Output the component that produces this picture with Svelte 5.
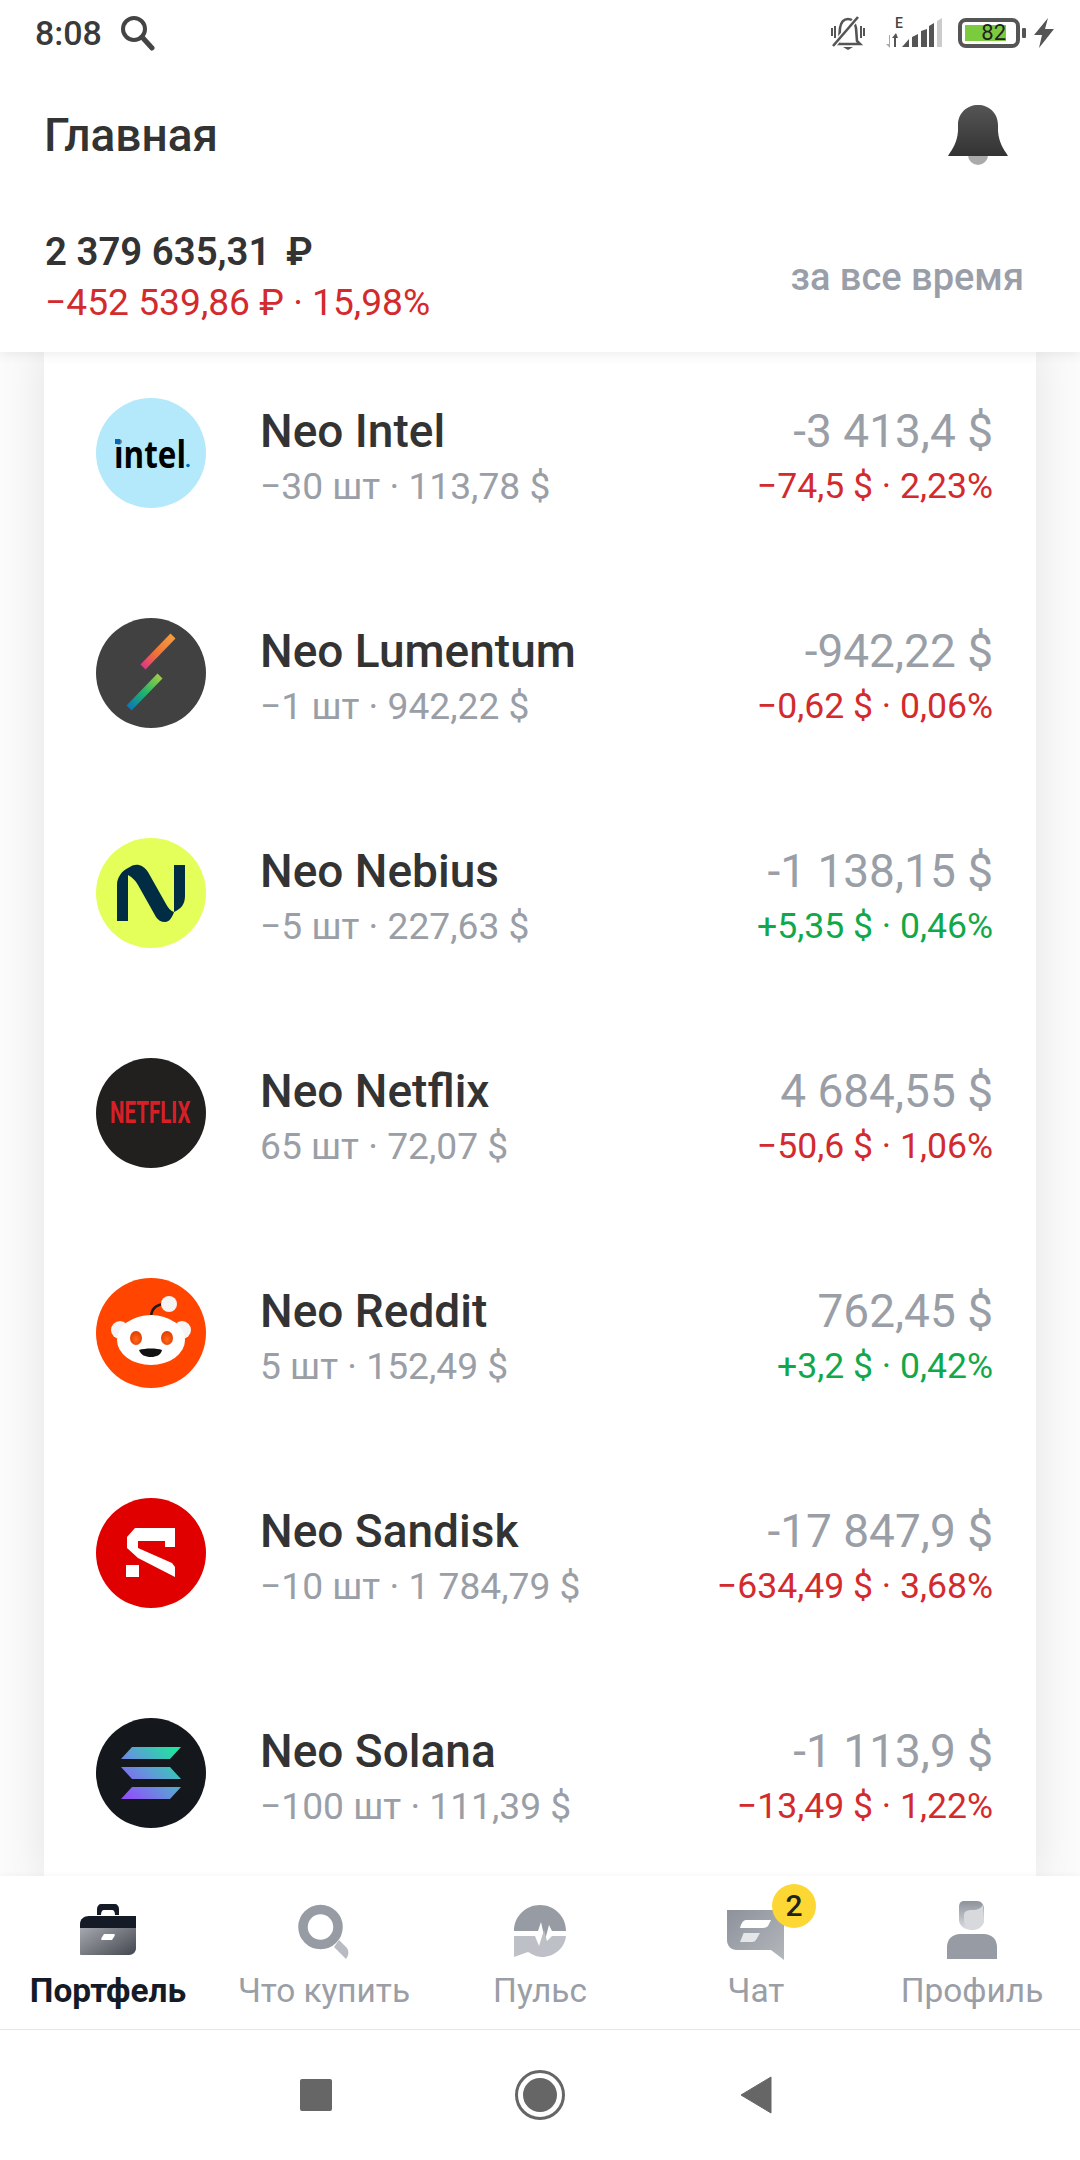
<script lang="ts">
    interface Position {
        id: string;
        name: string;
        sub: string;
        value: string;
        change: string;
        up: boolean;
    }

    const positions: Position[] = [
        { id: "intel", name: "Neo Intel", sub: "−30 шт · 113,78 $", value: "-3 413,4 $", change: "−74,5 $ · 2,23%", up: false },
        { id: "lumentum", name: "Neo Lumentum", sub: "−1 шт · 942,22 $", value: "-942,22 $", change: "−0,62 $ · 0,06%", up: false },
        { id: "nebius", name: "Neo Nebius", sub: "−5 шт · 227,63 $", value: "-1 138,15 $", change: "+5,35 $ · 0,46%", up: true },
        { id: "netflix", name: "Neo Netflix", sub: "65 шт · 72,07 $", value: "4 684,55 $", change: "−50,6 $ · 1,06%", up: false },
        { id: "reddit", name: "Neo Reddit", sub: "5 шт · 152,49 $", value: "762,45 $", change: "+3,2 $ · 0,42%", up: true },
        { id: "sandisk", name: "Neo Sandisk", sub: "−10 шт · 1 784,79 $", value: "-17 847,9 $", change: "−634,49 $ · 3,68%", up: false },
        { id: "solana", name: "Neo Solana", sub: "−100 шт · 111,39 $", value: "-1 113,9 $", change: "−13,49 $ · 1,22%", up: false },
    ];

    const tabs = [
        { id: "case", label: "Портфель" },
        { id: "search", label: "Что купить" },
        { id: "pulse", label: "Пульс" },
        { id: "chat", label: "Чат" },
        { id: "profile", label: "Профиль" },
    ];
</script>

<div class="screen">
    <header class="top">
        <div class="status">
            <div class="status-left">
                <span class="time">8:08</span>
                <svg class="status-search" width="36" height="36" viewBox="0 0 36 36">
                    <circle cx="15" cy="14" r="11" fill="none" stroke="#444" stroke-width="4" />
                    <path d="M23 22 L33 33" stroke="#444" stroke-width="5" stroke-linecap="round" />
                </svg>
            </div>
            <div class="status-right">
                <svg class="muted" width="36" height="36" viewBox="0 0 36 36">
                    <path d="M8 29 L10 26 L11 13 C12 7 15 4 19 4 C23 4 26 7 27 13 L28 26 L31 29 H8" fill="none" stroke="#555" stroke-width="2.600" />
                    <path d="M14 32 H24 L19 35 Z" fill="#555" />
                    <path d="M3 13 V21 M6 11 V23 M32 11 V23 M35 13 V21" stroke="#555" stroke-width="2" />
                    <path d="M29 2 L4 31" stroke="#fff" stroke-width="5" />
                    <path d="M29 2 L4 31" stroke="#555" stroke-width="2.600" />
                </svg>
                <svg class="signal" width="60" height="30" viewBox="0 0 60 30">
                    <path d="M4 17 V26 H1 L5 30 V17 Z" fill="#aaa" />
                    <path d="M9 29 V20 H7 L11 15 L13 20 H11 V29 Z" fill="#555" />
                    <path d="M17 29 L24 21 V29 Z M27 29 V19 L33 16 V29 Z M36 29 V13 L42 11 V29 Z M44 29 V8 L49 5 V29 Z" fill="#555" />
                    <path d="M52 29 V3 L57 0 V29 Z" fill="#ccc" />
                    <text x="10" y="10" class="e-mark">E</text>
                </svg>
                <div class="battery">
                    <div class="battery-box"><span class="battery-fill">82</span></div>
                    <span class="battery-nub"></span>
                </div>
                <svg class="bolt" width="20" height="30" viewBox="0 0 20 30">
                    <path d="M14 0 L0 17 H8 L5 30 L20 11 H11 Z" fill="#555" />
                </svg>
            </div>
        </div>

        <div class="title-row">
            <h1>Главная</h1>
            <svg width="60" height="60" viewBox="0 0 60 60">
                <defs>
                    <linearGradient id="bell" x1="0" y1="0" x2="0" y2="1">
                        <stop offset="0" stop-color="#555" />
                        <stop offset="1" stop-color="#333" />
                    </linearGradient>
                </defs>
                <circle cx="30" cy="50" r="10" fill="#aaa" />
                <path d="M0 51 C5 43 9 38 10 26 V20 C10 8 19 0 30 0 C41 0 50 8 50 20 V26 C51 38 55 43 60 51 Z" fill="url(#bell)" />
            </svg>
        </div>

        <div class="summary">
            <div>
                <div class="total">2 379 635,31 <span class="rub">₽</span></div>
                <div class="delta">−452 539,86 ₽ · 15,98%</div>
            </div>
            <span class="period">за все время</span>
        </div>
    </header>

    <main class="list">
        <div class="card">
            {#each positions as p}
                <div class="row">
                    <svg class="logo" viewBox="0 0 110 110">
                        {#if p.id === "intel"}
                            <circle cx="55" cy="55" r="55" fill="#b3e9fa" />
                            <text x="18" y="70" class="intel" textLength="72" lengthAdjust="spacingAndGlyphs">intel</text>
                            <rect x="18.500" y="40.500" width="6" height="6" fill="#b3e9fa" />
                            <rect x="19" y="41" width="5" height="5" fill="#0068b5" />
                            <circle cx="92" cy="67.500" r="1.800" fill="#0068b5" />
                        {:else if p.id === "lumentum"}
                            <defs>
                                <linearGradient id="lum1" gradientUnits="userSpaceOnUse" x1="79" y1="18" x2="44" y2="52">
                                    <stop offset="0" stop-color="#f6a040" />
                                    <stop offset="0.55" stop-color="#ee7038" />
                                    <stop offset="1" stop-color="#e0259a" />
                                </linearGradient>
                                <linearGradient id="lum2" gradientUnits="userSpaceOnUse" x1="66" y1="57" x2="31" y2="92">
                                    <stop offset="0" stop-color="#a8d040" />
                                    <stop offset="0.5" stop-color="#1fb56a" />
                                    <stop offset="1" stop-color="#0a6ec0" />
                                </linearGradient>
                            </defs>
                            <circle cx="55" cy="55" r="55" fill="#414141" />
                            <path d="M77 18 L47 49" stroke="url(#lum1)" stroke-width="7" />
                            <path d="M64 58 L33 90" stroke="url(#lum2)" stroke-width="7" />
                        {:else if p.id === "nebius"}
                            <circle cx="55" cy="55" r="55" fill="#e4ff59" />
                            <path d="M21 83 V47 C21 39 26 33 32 30 C36 27 40 26 43 27 C47 28 50 31 52 34 L70 66 C72 70 75 73 78 74 C76 80 73 84 69 84 C65 84 62 82 60 79 L42 47 C39 42 36 39 32 37 V83 Z" fill="#002c44" />
                            <path d="M78 27 H89 V58 C89 66 85 71 78 74 Z" fill="#002c44" />
                        {:else if p.id === "netflix"}
                            <circle cx="55" cy="55" r="55" fill="#221f1f" />
                            <text class="netflix" transform="translate(14 65) scale(1 1.500)">NETFLIX</text>
                        {:else if p.id === "reddit"}
                            <defs>
                                <radialGradient id="eye" cx="0.5" cy="0.6" r="0.6">
                                    <stop offset="0" stop-color="#ff6a1a" />
                                    <stop offset="1" stop-color="#e03a00" />
                                </radialGradient>
                            </defs>
                            <circle cx="55" cy="55" r="55" fill="#ff4500" />
                            <path d="M55 40 C55 31 60 27 67 26" fill="none" stroke="#1c1c1c" stroke-width="2.500" />
                            <circle cx="73" cy="26" r="8" fill="#f4f4f4" />
                            <circle cx="24" cy="52" r="9" fill="#f4f4f4" />
                            <circle cx="86" cy="52" r="9" fill="#f4f4f4" />
                            <ellipse cx="55" cy="62" rx="34" ry="25" fill="#fff" />
                            <ellipse cx="40" cy="60" rx="6" ry="7" fill="url(#eye)" />
                            <ellipse cx="71" cy="60" rx="6" ry="7" fill="url(#eye)" />
                            <path d="M43 72 C49 70 61 70 66 72 C65 77 60 79 55 79 C49 79 45 77 43 72 Z" fill="#111" />
                        {:else if p.id === "sandisk"}
                            <circle cx="55" cy="55" r="55" fill="#e00000" />
                            <path d="M79 30 H39 L31 39 V50 L42 60 L79 79 V69 L76 65 L42 50 V43 H69 V49 H79 Z" fill="#fff" />
                            <rect x="30" y="67" width="13" height="12" fill="#fff" />
                        {:else}
                            <defs>
                                <linearGradient id="sol" gradientUnits="userSpaceOnUse" x1="28" y1="84" x2="82" y2="26">
                                    <stop offset="0" stop-color="#9945ff" />
                                    <stop offset="0.5" stop-color="#5f9bd8" />
                                    <stop offset="1" stop-color="#14f195" />
                                </linearGradient>
                            </defs>
                            <circle cx="55" cy="55" r="55" fill="#14171c" />
                            <path d="M36 29 H85 L74 41 H25 Z M25 49 H74 L85 61 H36 Z M36 69 H85 L74 81 H25 Z" fill="url(#sol)" />
                        {/if}
                    </svg>
                    <div class="info">
                        <div class="name">{p.name}</div>
                        <div class="sub">{p.sub}</div>
                    </div>
                    <div class="amounts">
                        <div class="value">{p.value}</div>
                        <div class="change" class:up={p.up}>{p.change}</div>
                    </div>
                </div>
            {/each}
        </div>
    </main>

    <nav class="tabs">
        {#each tabs as t, i}
            <div class="tab" class:active={i === 0}>
                <svg width="64" height="64" viewBox="0 0 64 64">
                    {#if t.id === "case"}
                        <defs>
                            <linearGradient id="caseBody" x1="0" y1="0" x2="1" y2="0.8">
                                <stop offset="0" stop-color="#a5a8ae" />
                                <stop offset="1" stop-color="#4b4f57" />
                            </linearGradient>
                        </defs>
                        <path d="M21 15 V9 C21 6 23 4 25 4 H39 C41 4 43 6 43 9 V15 H39 C39 12 38 10 36 10 H28 C26 10 25 12 25 15 Z" fill="#151b26" />
                        <path d="M4 28 V54 C4 54.500 4.500 55 5 55 H53 C57 55 60 52 60 48 V28 Z" fill="url(#caseBody)" />
                        <path d="M4 28 V24 C4 19 8 16 13 16 H60 V28 Z" fill="#151b26" />
                        <path d="M28 34 H38 C39 34 39 35 38.500 36 L36 40 H26 C25 40 25 39 25.500 38 Z" fill="#fff" />
                    {:else if t.id === "search"}
                        <path d="M42 47 L47 40 L55 48 C57 51 57 55 54 59 Z" fill="#b8bcc2" />
                        <circle cx="28.500" cy="27" r="17.500" fill="none" stroke="#969ba4" stroke-width="9.500" />
                    {:else if t.id === "pulse"}
                        <path d="M6 31 C6 16 18 5 32 5 C46 5 58 16 58 31 H44 L41 25 L37 40 L33 22 L30 31 Z" fill="#969ba4" />
                        <path d="M6 36 H27 L31 46 L36 30 L39 41 L44 36 H58 C57 48 46 57 34 57 C28 57 24 54 20 52 L6 57 Z" fill="#bdc0c6" />
                    {:else if t.id === "chat"}
                        <defs>
                            <linearGradient id="chatBody" x1="0" y1="0" x2="1" y2="1">
                                <stop offset="0" stop-color="#8d929b" />
                                <stop offset="1" stop-color="#b4b7bc" />
                            </linearGradient>
                        </defs>
                        <path d="M3 10 H60 V60 L47 50 H13 C7 50 3 46 3 40 Z" fill="url(#chatBody)" />
                        <path d="M22 20 H47 L44 26 C43 27 41 28 39 28 H16 C17 24 19 20 22 20 Z" fill="#fff" />
                        <path d="M20 33 H36 L32 40 C31 41 30 42 28 42 H16 L18.500 36 C19 34 19.500 33 20 33 Z" fill="#e4e6e9" />
                    {:else}
                        <defs>
                            <linearGradient id="head" x1="0" y1="0" x2="0" y2="1">
                                <stop offset="0" stop-color="#8d929b" />
                                <stop offset="1" stop-color="#dcdee2" />
                            </linearGradient>
                        </defs>
                        <path d="M19 7 C19 3 21 1 24 1 H37 C41 1 44 4 44 9 V20 C44 26 38 30 32 30 C25 30 19 26 19 20 Z" fill="url(#head)" />
                        <path d="M24 20 V15 C24 11 28 10 32 10 C38 10 42 8 43 4 L44 20 C44 26 38 30 32 30 C28 30 24 26 24 20 Z" fill="#d7d9dd" />
                        <path d="M7 59 V47 C7 39 13 34 20 34 H44 C51 34 57 39 57 47 V59 Z" fill="#969ba4" />
                    {/if}
                </svg>
                {#if t.id === "chat"}
                    <span class="badge">2</span>
                {/if}
                <span class="tab-label">{t.label}</span>
            </div>
        {/each}
    </nav>

    <div class="system-nav">
        <span class="sys-square"></span>
        <span class="sys-circle"></span>
        <svg width="32" height="38" viewBox="0 0 32 38">
            <path d="M1 19 L31 1 V37 Z" fill="#666" stroke="#666" stroke-linejoin="round" stroke-width="1" />
        </svg>
    </div>
</div>

<style>
    :global(body) {
        margin: 0;
        background: #fff;
    }

    .screen {
        width: 1080px;
        height: 2160px;
        display: flex;
        flex-direction: column;
        font-family: Roboto, "Noto Sans", sans-serif;
        overflow: hidden;
    }

    .top {
        position: relative;
        z-index: 2;
        height: 352px;
        flex-shrink: 0;
        background: #fff;
        box-shadow: 0 2px 12px rgba(0, 0, 0, 0.08);
    }

    .status {
        height: 66px;
        padding: 0 26px 0 35px;
        display: flex;
        justify-content: space-between;
        align-items: center;
    }

    .status-left,
    .status-right {
        display: flex;
        align-items: center;
    }

    .status-left {
        gap: 17px;
    }

    .time {
        font-size: 34px;
        font-weight: 500;
        color: #3a3a3a;
    }

    .signal {
        margin-left: 20px;
        overflow: visible;
    }

    .e-mark {
        font-family: Roboto, sans-serif;
        font-size: 14px;
        font-weight: 500;
        fill: #444;
    }

    .battery {
        margin-left: 13px;
        display: flex;
        align-items: center;
        gap: 2px;
    }

    .bolt {
        margin-left: 8px;
    }

    .battery-box {
        width: 62px;
        height: 30px;
        box-sizing: border-box;
        border: 4px solid #555;
        border-radius: 8px;
        padding: 3px;
        display: flex;
    }

    .battery-fill {
        width: 41px;
        background: #7ccb3e;
        color: #222;
        font-size: 22px;
        line-height: 16px;
        text-align: right;
    }

    .battery-nub {
        width: 4px;
        height: 10px;
        background: #555;
        border-radius: 1px;
    }

    .title-row {
        height: 100px;
        margin-top: 19px;
        padding: 0 72px 0 44px;
        display: flex;
        justify-content: space-between;
        align-items: center;
    }

    h1 {
        margin: 0;
        font-size: 46px;
        font-weight: 500;
        color: #333;
    }

    .summary {
        margin-top: 42px;
        padding: 0 56px 0 45px;
        display: flex;
        justify-content: space-between;
        align-items: center;
    }

    .total {
        font-size: 38.400px;
        font-weight: 600;
        line-height: 50px;
        color: #333;
    }

    .rub {
        margin-left: 6px;
    }

    .delta {
        font-size: 37.200px;
        line-height: 50px;
        color: #d32a2e;
    }

    .period {
        font-size: 38px;
        font-weight: 500;
        color: #9a9ea8;
    }

    .list {
        flex: 1;
        min-height: 0;
        overflow: hidden;
        background: #fbfbfb;
    }

    .card {
        margin: -9px 44px 0;
        background: #fff;
        box-shadow: 0 0 44px rgba(0, 0, 0, 0.1);
    }

    .row {
        height: 220px;
        padding: 0 43px 0 52px;
        display: flex;
        align-items: center;
    }

    .logo {
        width: 110px;
        height: 110px;
        flex-shrink: 0;
        margin-right: 54px;
    }

    .intel {
        font-family: "Open Sans", sans-serif;
        font-size: 38px;
        font-weight: 700;
        fill: #000;
    }

    .netflix {
        font-family: Roboto, sans-serif;
        font-size: 20.500px;
        font-weight: 700;
        fill: #d81f26;
    }

    .info,
    .amounts {
        margin-top: 12px;
    }

    .info {
        flex: 1;
        min-width: 0;
    }

    .name {
        font-size: 46px;
        font-weight: 500;
        line-height: 54px;
        color: #333;
    }

    .sub {
        font-size: 37.200px;
        line-height: 56px;
        color: #9a9ea6;
    }

    .amounts {
        text-align: right;
    }

    .value {
        font-size: 46px;
        line-height: 54px;
        color: #9a9ea6;
    }

    .change {
        font-size: 35.600px;
        line-height: 56px;
        color: #d32a2e;
    }

    .change.up {
        color: #11a84a;
    }

    .tabs {
        position: relative;
        z-index: 1;
        flex-shrink: 0;
        height: 154px;
        box-sizing: border-box;
        background: #fff;
        border-bottom: 1px solid #e6e6e6;
        box-shadow: 0 -2px 5px rgba(0, 0, 0, 0.03);
        display: grid;
        grid-template-columns: repeat(5, 1fr);
        padding-top: 24px;
    }

    .tab {
        position: relative;
        display: flex;
        flex-direction: column;
        align-items: center;
    }

    .tab-label {
        margin-top: 7px;
        font-size: 33.400px;
        line-height: 40px;
        color: #9a9ea6;
        white-space: nowrap;
    }

    .tab.active .tab-label {
        font-weight: 700;
        color: #151b26;
    }

    .badge {
        position: absolute;
        left: 124px;
        top: -16px;
        width: 44px;
        height: 44px;
        border-radius: 50%;
        background: #fdd835;
        color: #222;
        font-size: 30px;
        font-weight: 500;
        line-height: 44px;
        text-align: center;
    }

    .system-nav {
        flex-shrink: 0;
        height: 130px;
        background: #fff;
        position: relative;
        display: grid;
        grid-template-columns: 432px 216px 216px;
        justify-items: center;
        align-items: center;
    }

    .sys-square {
        justify-self: end;
        margin-right: 100px;
        width: 32px;
        height: 32px;
        border-radius: 2px;
        background: #666;
    }

    .sys-circle {
        width: 50px;
        height: 50px;
        box-sizing: border-box;
        border-radius: 50%;
        background: #666;
        background-clip: content-box;
        padding: 5px;
        border: 3px solid #666;
    }
</style>
